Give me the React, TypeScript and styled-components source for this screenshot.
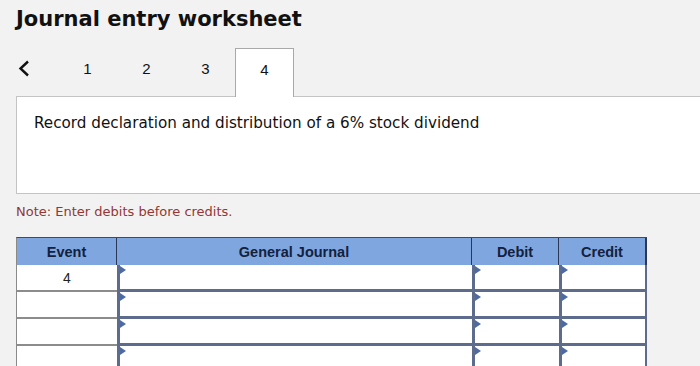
import React from 'react';
import styled, { createGlobalStyle } from 'styled-components';

const GlobalStyle = createGlobalStyle`
  html, body {
    margin: 0;
    padding: 0;
    background: #f2f2f2;
    overflow: hidden;
  }
`;

const tabs = ['1', '2', '3', '4'];
const rows = ['4', '', '', ''];

const App: React.FC = () => {
  return (
    <Page>
      <GlobalStyle />
      <Title>Journal entry worksheet</Title>
      <TabBar>
        <Prev>
          <svg width="12" height="17" viewBox="0 0 12 17">
            <polyline points="10,1.5 2.5,8.5 10,15.5" fill="none" stroke="#111" strokeWidth="2.4" />
          </svg>
        </Prev>
        {tabs.map((t) => (
          <Tab key={t} $active={t === '4'}>
            {t}
          </Tab>
        ))}
      </TabBar>
      <Panel>
        <Prompt>Record declaration and distribution of a 6% stock dividend</Prompt>
      </Panel>
      <Note>Note: Enter debits before credits.</Note>
      <Grid>
        <HeadCell>Event</HeadCell>
        <HeadCell>General Journal</HeadCell>
        <HeadCell>Debit</HeadCell>
        <HeadCell $last>Credit</HeadCell>
        {rows.map((ev, i) => (
          <React.Fragment key={i}>
            <EventCell>{ev}</EventCell>
            <InputCell />
            <InputCell />
            <InputCell />
          </React.Fragment>
        ))}
      </Grid>
    </Page>
  );
};

export default App;

const Page = styled.div`
  padding: 6px 0 0 16px;
  font-family: 'DejaVu Sans', Verdana, sans-serif;
  color: #111;
`;

const Title = styled.h1`
  margin: 0;
  font-size: 21px;
  line-height: 26px;
  font-weight: bold;
  color: #111;
`;

const TabBar = styled.div`
  display: flex;
  align-items: stretch;
  height: 48px;
  margin-top: 16px;
`;

const Prev = styled.div`
  width: 42px;
  display: flex;
  align-items: center;
  padding-left: 2px;
  padding-bottom: 8px;
  box-sizing: border-box;
`;

const Tab = styled.div<{ $active?: boolean }>`
  width: 59px;
  box-sizing: border-box;
  display: flex;
  align-items: center;
  justify-content: center;
  padding-bottom: 8px;
  font-family: 'Liberation Sans', Arial, sans-serif;
  font-size: 15px;
  color: #111;
  background: ${(p) => (p.$active ? '#fff' : 'transparent')};
  border: 1px solid ${(p) => (p.$active ? '#a9a9a9' : 'transparent')};
  border-bottom: none;
  margin-bottom: ${(p) => (p.$active ? '-1px' : '0')};
  position: relative;
  z-index: 1;
`;

const Panel = styled.div`
  height: 98px;
  box-sizing: border-box;
  background: #fff;
  border: 1px solid #c4c4c4;
  border-right: none;
  padding: 16px 0 0 17px;
`;

const Prompt = styled.p`
  margin: 0;
  font-size: 15.2px;
  line-height: 20px;
  color: #111;
`;

const Note = styled.p`
  margin: 10px 0 0;
  font-size: 13px;
  line-height: 16px;
  color: #943634;
`;

const Grid = styled.div`
  display: grid;
  grid-template-columns: 100px 355px 87px 88px;
  grid-auto-rows: 27px;
  margin-top: 17px;
  width: 630px;
  border-left: 1px solid #8a8a8a;
  border-top: 1px solid #3a4a68;
`;

const HeadCell = styled.div<{ $last?: boolean }>`
  height: 29px;
  box-sizing: border-box;
  display: flex;
  align-items: center;
  justify-content: center;
  background: #7fa6de;
  border-right: ${(p) => (p.$last ? '2px' : '1px')} solid #2a3856;
  border-bottom: 2px solid #2a3856;
  font-family: 'Liberation Sans', Arial, sans-serif;
  font-weight: bold;
  font-size: 14.5px;
  color: #13213f;
`;

const EventCell = styled.div`
  box-sizing: border-box;
  display: flex;
  align-items: center;
  justify-content: center;
  background: #fff;
  border-bottom: 2px solid #8c8c8c;
  font-family: 'Liberation Sans', Arial, sans-serif;
  font-size: 14px;
  color: #222;
`;

const InputCell = styled.div`
  box-sizing: border-box;
  background: #fff;
  border-left: 3px solid #5d6c8c;
  border-bottom: 3px solid #5d6c8c;
  position: relative;

  &:nth-child(4n) {
    border-right: 2px solid #5d6c8c;
  }

  &::before {
    content: '';
    position: absolute;
    left: 0;
    top: 1px;
    border-top: 4px solid transparent;
    border-bottom: 4px solid transparent;
    border-left: 6px solid #4d6aa3;
  }
`;
